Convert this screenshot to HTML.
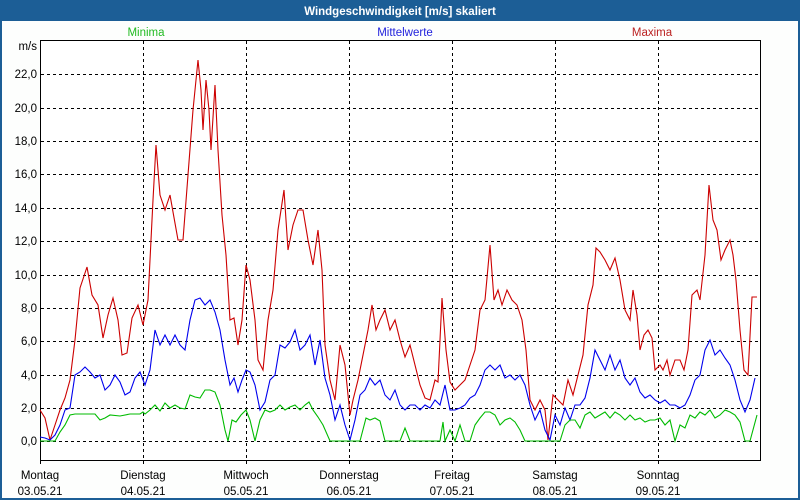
<!DOCTYPE html>
<html><head><meta charset="utf-8"><style>
html,body{margin:0;padding:0;width:800px;height:500px;overflow:hidden;background:#fdfefd;}
</style></head><body>
<svg width="800" height="500" xmlns="http://www.w3.org/2000/svg" font-family="'Liberation Sans',sans-serif" font-size="11.5">
<rect x="0" y="0" width="800" height="500" fill="#fdfefd"/>
<rect x="0" y="0" width="800" height="21" fill="#1c5e96"/>
<rect x="0" y="0" width="2" height="500" fill="#1c5e96"/>
<rect x="798" y="0" width="2" height="500" fill="#1c5e96"/>
<rect x="0" y="498" width="800" height="2" fill="#1c5e96"/>
<text x="400" y="15" text-anchor="middle" fill="#fff" font-weight="bold" font-size="11.5">Windgeschwindigkeit [m/s] skaliert</text>
<text x="146" y="36" text-anchor="middle" fill="#22bb22">Minima</text>
<text x="405" y="36" text-anchor="middle" fill="#2222dd">Mittelwerte</text>
<text x="652" y="36" text-anchor="middle" fill="#bb2222">Maxima</text>
<rect x="40.5" y="40.5" width="720" height="420" fill="#fff" stroke="#000" stroke-width="1"/>
<g stroke="#000" stroke-dasharray="3,3" stroke-width="1">
<path d="M143.5 41V460M246.5 41V460M349.5 41V460M452.5 41V460M555.5 41V460M658.5 41V460"/>
<path d="M41 441.5H760M41 408.5H760M41 375.5H760M41 341.5H760M41 308.5H760M41 275.5H760M41 241.5H760M41 208.5H760M41 174.5H760M41 141.5H760M41 108.5H760M41 74.5H760"/>
</g>
<path d="M40.5 460v4M143.5 460v4M246.5 460v4M349.5 460v4M452.5 460v4M555.5 460v4M658.5 460v4" stroke="#000"/>
<g text-anchor="end" fill="#000">
<text x="37" y="50">m/s</text>
<text x="37" y="445">0,0</text><text x="37" y="412">2,0</text><text x="37" y="379">4,0</text><text x="37" y="345">6,0</text><text x="37" y="312">8,0</text><text x="37" y="279">10,0</text><text x="37" y="245">12,0</text><text x="37" y="212">14,0</text><text x="37" y="178">16,0</text><text x="37" y="145">18,0</text><text x="37" y="112">20,0</text><text x="37" y="78">22,0</text>
</g>
<g text-anchor="middle" fill="#000">
<text x="40" y="479">Montag</text><text x="40" y="495">03.05.21</text>
<text x="143" y="479">Dienstag</text><text x="143" y="495">04.05.21</text>
<text x="246" y="479">Mittwoch</text><text x="246" y="495">05.05.21</text>
<text x="349" y="479">Donnerstag</text><text x="349" y="495">06.05.21</text>
<text x="452" y="479">Freitag</text><text x="452" y="495">07.05.21</text>
<text x="555" y="479">Samstag</text><text x="555" y="495">08.05.21</text>
<text x="658" y="479">Sonntag</text><text x="658" y="495">09.05.21</text>
</g>
<g fill="none" stroke-width="1.1">
<polyline stroke="#cc0000" points="40,410 45,418 50,440 55,425 60,410 65,398 70,380 75,340 80,288 87,267 92,295 98,305 103,338 108,315 113,298 118,320 122,355 127,353 132,318 138,305 143,325 148,300 153,200 156,145 160,195 165,210 170,195 173,212 178,240 183,240 188,175 193,110 198,60 201,90 203,130 206,80 209,110 211,150 215,85 218,150 222,215 226,255 230,320 234,318 238,345 242,320 246,265 250,280 255,320 258,360 263,370 268,320 273,290 278,230 284,190 288,250 293,225 298,210 303,210 308,240 313,265 318,230 322,270 325,345 330,380 335,400 340,345 345,365 350,415 353,400 358,380 363,355 368,330 372,305 376,330 380,320 385,310 390,330 395,320 400,340 405,357 410,345 415,365 420,385 425,398 430,400 435,380 438,382 442,298 446,350 450,382 455,390 460,385 465,380 470,365 475,350 480,310 485,300 490,245 494,300 498,290 502,305 507,290 512,300 517,305 522,320 526,350 530,400 535,410 540,400 545,410 548,440 553,395 558,400 563,405 568,380 573,395 578,375 583,355 588,305 593,285 596,248 600,252 605,260 610,270 615,258 620,280 625,310 630,320 633,290 637,315 640,350 644,335 648,330 652,338 655,370 660,365 663,370 667,360 670,375 675,360 680,360 684,370 688,350 692,295 697,290 700,300 705,255 709,185 713,220 717,230 721,260 725,250 730,240 733,255 736,280 740,330 744,370 748,375 752,297 757,297"/>
<polyline stroke="#0000ee" points="40,437 45,438 50,440 55,435 60,425 65,410 70,408 75,375 80,372 85,367 90,372 95,378 100,375 105,390 110,385 115,375 120,382 125,395 130,392 135,378 140,372 145,385 150,370 155,330 160,345 165,335 170,345 175,335 180,345 185,350 190,320 195,300 200,298 205,305 210,300 215,312 220,330 225,360 230,385 234,378 238,392 242,380 246,370 250,372 255,385 260,410 265,402 270,380 275,375 280,345 285,348 290,342 295,330 300,350 305,345 310,335 315,365 320,340 325,378 330,395 335,420 340,405 345,425 350,440 355,420 360,395 365,390 370,378 375,385 380,380 385,395 390,400 395,390 400,405 405,410 410,405 415,405 420,410 425,405 430,408 435,400 440,405 445,385 450,410 455,410 460,408 465,405 470,398 475,395 480,385 485,370 490,365 495,370 500,365 505,378 510,375 515,380 520,375 525,385 530,405 535,420 540,410 545,430 550,440 555,415 560,425 565,408 570,420 575,405 580,405 585,398 590,378 595,350 600,360 605,370 610,355 615,370 620,360 625,378 630,385 635,378 640,392 645,398 650,395 655,400 660,403 665,400 670,405 675,405 680,408 685,405 690,395 695,380 700,375 705,350 710,340 715,355 720,350 725,358 730,365 735,380 740,400 745,412 750,400 755,378"/>
<polyline stroke="#00bb00" points="40,441 55,441 60,432 65,425 70,415 75,414 95,414 100,420 105,418 110,415 120,416 130,414 140,414 143,412 145,414 150,410 155,405 160,411 165,403 170,408 175,405 180,408 185,409 190,395 195,397 200,398 205,390 210,390 215,392 220,405 225,430 228,441 232,420 236,422 241,415 246,410 250,420 255,441 260,420 265,410 270,412 275,410 280,405 285,410 290,407 295,405 300,410 305,405 309,402 313,410 318,417 323,425 330,441 360,441 366,418 370,420 375,418 380,421 385,441 400,441 405,428 410,441 440,441 443,422 445,441 450,430 455,441 460,425 465,441 470,441 475,425 480,418 485,412 490,412 495,415 500,425 505,420 510,418 515,422 520,430 525,441 560,441 565,425 570,420 575,420 580,428 585,415 590,412 595,418 600,415 605,412 610,418 615,412 620,415 625,420 630,415 635,420 640,418 645,422 650,420 655,420 660,418 665,425 670,420 675,441 680,425 685,428 690,415 695,418 700,412 705,415 710,410 715,418 720,415 725,410 730,412 735,415 740,422 745,441 750,441 757,415"/>
</g>
</svg>
</body></html>
